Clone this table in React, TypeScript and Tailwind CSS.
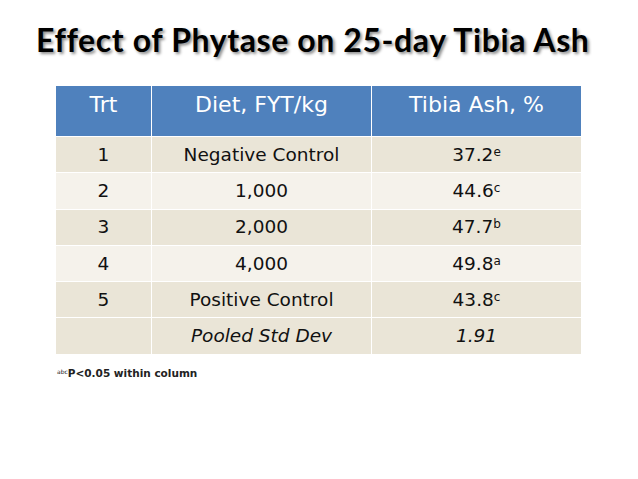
const rows = [
  { trt: '1', diet: 'Negative Control', ash: '37.2', sup: 'e' },
  { trt: '2', diet: '1,000', ash: '44.6', sup: 'c' },
  { trt: '3', diet: '2,000', ash: '47.7', sup: 'b' },
  { trt: '4', diet: '4,000', ash: '49.8', sup: 'a' },
  { trt: '5', diet: 'Positive Control', ash: '43.8', sup: 'c' },
];

const band = (i: number) => (i % 2 === 0 ? 'bg-[#eae5d7]' : 'bg-[#f5f2eb]');

export default function App() {
  return (
    <div className="w-[638px] h-[479px] bg-white overflow-hidden font-['DejaVu_Sans',sans-serif] text-[#111]">
      {/* slide title */}
      <h1 className="pt-[21px] pl-[36px] h-[86px] font-['Lato',sans-serif] font-bold text-[32px] leading-[38px] tracking-[0.6px] text-black [text-shadow:2px_2px_3px_rgba(0,0,0,0.45)]">
        Effect of Phytase on 25-day Tibia Ash
      </h1>

      <div className="ml-[56px] w-[525px] grid grid-cols-[95px_219px_209px] gap-px bg-white">
        <div className="h-[50px] bg-[#4f81bd] text-white text-[22px] leading-[26px] pt-[6px] text-center">Trt</div>
        <div className="h-[50px] bg-[#4f81bd] text-white text-[22px] leading-[26px] pt-[6px] text-center">Diet, FYT/kg</div>
        <div className="h-[50px] bg-[#4f81bd] text-white text-[22px] leading-[26px] pt-[6px] text-center">Tibia Ash, %</div>

        {rows.map((r, i) => (
          <div key={r.trt} className="contents">
            <div className={`${band(i)} h-[35.3px] flex items-center justify-center text-[18.5px]`}>{r.trt}</div>
            <div className={`${band(i)} h-[35.3px] flex items-center justify-center text-[18.5px]`}>{r.diet}</div>
            <div className={`${band(i)} h-[35.3px] flex items-center justify-center text-[18.5px]`}>
              {r.ash}
              <sup className="text-[12px] relative -top-[3px]">{r.sup}</sup>
            </div>
          </div>
        ))}

        <div className="bg-[#eae5d7] h-[35.3px]" />
        <div className="bg-[#eae5d7] h-[35.3px] flex items-center justify-center text-[18.5px] italic">Pooled Std Dev</div>
        <div className="bg-[#eae5d7] h-[35.3px] flex items-center justify-center text-[18.5px] italic">1.91</div>
      </div>

      <p className="mt-[12px] ml-[57px] text-[10.5px] font-bold text-[#222]">
        <sup className="text-[6px] font-normal">abc</sup>P&lt;0.05 within column
      </p>
    </div>
  );
}
